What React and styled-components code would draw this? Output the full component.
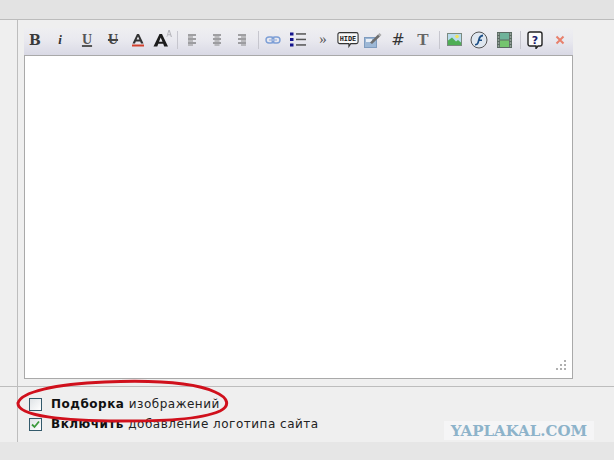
import React from "react";
import styled, { createGlobalStyle } from "styled-components";

const Global = createGlobalStyle`
  html, body { margin: 0; padding: 0; background: #efefef; }
  body { font-family: "DejaVu Sans", Verdana, sans-serif; overflow: hidden; }
`;

const Page = styled.div`
  position: relative;
  width: 614px;
  height: 460px;
  display: flex;
  flex-direction: column;
  background: #efefef;
  overflow: hidden;
`;
const TopBand = styled.div`
  height: 19px;
  flex: none;
  background: #e3e3e3;
  border-bottom: 1px solid #bcbcbc;
`;
const Body = styled.div`
  flex: 1;
  display: flex;
  min-height: 0;
`;
const Gutter = styled.div`
  width: 17px;
  flex: none;
  border-right: 1px solid #bdbdbd;
`;
const Content = styled.div`
  flex: 1;
  display: flex;
  flex-direction: column;
  min-width: 0;
`;
const EditorArea = styled.div`
  height: 366px;
  flex: none;
  box-sizing: border-box;
  padding: 8px 41px 0 6px;
`;
const Divider = styled.div`
  height: 1px;
  flex: none;
  margin-left: -18px;
  background: #bdbdbd;
`;
const Editor = styled.div`
  display: flex;
  flex-direction: column;
  height: 351px;
`;
const Toolbar = styled.div`
  height: 27px;
  flex: none;
  box-sizing: border-box;
  padding-bottom: 4px;
  display: flex;
  align-items: center;
  gap: 3px;
  background: linear-gradient(#efeff1, #e9e9ef 45%, #d9d9e5);
`;
const ToolButton = styled.span`
  width: 22px;
  height: 22px;
  flex: none;
  margin-left: ${(p) => p.$offset || 0}px;
  display: flex;
  align-items: center;
  justify-content: center;
  color: ${(p) => p.$color || "#333"};
  font-family: ${(p) => p.$font || '"Liberation Serif", serif'};
  font-size: ${(p) => p.$size || 14}px;
  font-weight: ${(p) => p.$weight || "bold"};
  font-style: ${(p) => (p.$italic ? "italic" : "normal")};
  text-decoration: ${(p) => p.$deco || "none"};
  text-decoration-thickness: 2px;
  line-height: 1;
`;
const Separator = styled.span`
  width: 1px;
  height: 18px;
  flex: none;
  margin-left: ${(p) => p.$offset || 0}px;
  background: #c6c6ce;
`;
const TextArea = styled.div`
  position: relative;
  flex: 1;
  background: #fff;
  border: 1px solid #a9a9a9;
`;
const Grip = styled.svg`
  position: absolute;
  right: 5px;
  bottom: 6px;
`;
const Options = styled.div`
  display: flex;
  flex-direction: column;
  gap: 6px;
  padding: 10px 0 0 11px;
`;
const OptionRow = styled.label`
  display: flex;
  align-items: center;
  gap: 9px;
  height: 14px;
  font-size: 12px;
  letter-spacing: 0.5px;
  color: #222;
  white-space: nowrap;
`;
const Box = styled.span`
  width: 11px;
  height: 11px;
  flex: none;
  display: flex;
  align-items: center;
  justify-content: center;
  background: linear-gradient(135deg, #dfe3e6, #fff);
  border: 1px solid #335a6b;
`;
const Strong = styled.b`
  font-weight: bold;
  color: #111;
`;
const BottomBand = styled.div`
  height: 18px;
  flex: none;
  background: #e6e6e6;
`;
const Ring = styled.svg`
  position: absolute;
  left: 15px;
  top: 378px;
  pointer-events: none;
`;
const Watermark = styled.div`
  position: absolute;
  left: 444px;
  top: 421px;
  width: 150px;
  height: 19px;
  display: flex;
  align-items: center;
  justify-content: center;
  background: #f5f5f6;
  color: #8db3ca;
  font-family: "DejaVu Serif", serif;
  font-weight: bold;
  font-size: 15px;
`;

const Lines = ({ rows }) => (
  <svg width="10" height="12" viewBox="0 0 10 12">
    {rows.map(([x, w], i) => (
      <rect key={i} x={x} y={0.5 + i * 2} width={w} height="1" fill={i % 2 ? "#8c8c8c" : "#555"} />
    ))}
  </svg>
);

const left = [[1, 8], [1, 5], [1, 8], [1, 5], [1, 8], [1, 5]];
const center = [[1, 8], [2.500, 5], [1, 8], [2.500, 5], [1, 8], [2.500, 5]];
const right = [[1, 8], [4, 5], [1, 8], [4, 5], [1, 8], [4, 5]];

export default function App() {
  return (
    <Page>
      <Global />
      <TopBand />
      <Body>
        <Gutter />
        <Content>
          <EditorArea>
            <Editor>
              <Toolbar>
                <ToolButton $size={14} $font='"DejaVu Serif", serif' $color="#3a3a3a">B</ToolButton>
                <ToolButton $size={13} $italic>i</ToolButton>
                <ToolButton $offset={2} $size={14} $deco="underline" $color="#555">U</ToolButton>
                <ToolButton $offset={1} $size={14} $deco="line-through" $color="#444">U</ToolButton>
                <ToolButton>
                  <svg width="14" height="16" viewBox="0 0 14 16">
                    <path d="M1.500 11.500 6 2h2l4.500 9.500H10L9.200 9.500H4.800L4 11.500z M5.600 7.500h2.800L7 4.400z" fill="#333" fillRule="evenodd" />
                    <rect x="1" y="12.500" width="12" height="2" fill="#d2402c" />
                  </svg>
                </ToolButton>
                <ToolButton>
                  <svg width="22" height="22" viewBox="0 0 22 22">
                    <path d="M1.500 17.500 7.500 5h2.500l6 12.500h-3.800l-1-2.700H6.300l-1 2.700z M7 12.800h3.500L8.700 8.500z" fill="#1c1c1c" fillRule="evenodd" />
                    <path d="M14.500 8 16.400 1h1.300L20 8h-1.200l-.5-1.800h-2.600L15.200 8z M16.100 5.200h1.900L17 2.600z" fill="#b5b5bb" fillRule="evenodd" />
                  </svg>
                </ToolButton>
                <Separator />
                <ToolButton><Lines rows={left} /></ToolButton>
                <ToolButton><Lines rows={center} /></ToolButton>
                <ToolButton><Lines rows={right} /></ToolButton>
                <Separator $offset={2} />
                <ToolButton>
                  <svg width="16" height="10" viewBox="0 0 16 10" fill="none" stroke="#7d9fd6" strokeWidth="1.400">
                    <rect x="1" y="2" width="8" height="6" rx="3" />
                    <rect x="7" y="2" width="8" height="6" rx="3" />
                    <path d="M4 5h8" stroke="#a8bce0" />
                  </svg>
                </ToolButton>
                <ToolButton>
                  <svg width="16" height="15" viewBox="0 0 16 15">
                    <rect x="0" y="0.500" width="3.500" height="3" fill="#14148c" />
                    <rect x="0" y="6" width="3.500" height="3" fill="#14148c" />
                    <rect x="0" y="11.500" width="3.500" height="3" fill="#14148c" />
                    <rect x="6" y="1.200" width="10" height="1.500" fill="#555" />
                    <rect x="6" y="6.700" width="10" height="1.500" fill="#555" />
                    <rect x="6" y="12.200" width="10" height="1.500" fill="#555" />
                  </svg>
                </ToolButton>
                <ToolButton $size={15} $color="#555" $weight="normal">»</ToolButton>
                <ToolButton>
                  <svg width="24" height="17" viewBox="0 0 24 17">
                    <path d="M3 1h18a2 2 0 0 1 2 2v8a2 2 0 0 1-2 2h-6l-2 3v-3H3a2 2 0 0 1-2-2V3a2 2 0 0 1 2-2z" fill="#f8f8f8" stroke="#333" strokeWidth="1.200" />
                    <text x="12" y="10" textAnchor="middle" fontFamily="'DejaVu Sans Mono', monospace" fontWeight="bold" fontSize="7.500" fill="#222">HIDE</text>
                  </svg>
                </ToolButton>
                <ToolButton>
                  <svg width="18" height="16" viewBox="0 0 18 16">
                    <rect x="0.500" y="5.500" width="12" height="10" fill="#9db8d6" stroke="#7f9cbf" />
                    <rect x="2" y="7" width="6" height="3" fill="#e9eef5" />
                    <path d="M6 10.500 14 2.500l2 2-8 7.500z" fill="#6e6e6e" />
                    <path d="M14 2.500 15.500 1 17.500 3 16 4.500z" fill="#aaa" />
                  </svg>
                </ToolButton>
                <ToolButton $size={16} $font='"DejaVu Sans", sans-serif' $color="#333" $weight="normal">#</ToolButton>
                <ToolButton $size={17} $color="#666">T</ToolButton>
                <Separator $offset={2} />
                <ToolButton>
                  <svg width="15" height="13" viewBox="0 0 15 13">
                    <rect x="0.500" y="0.500" width="14" height="12" fill="#b9dcec" stroke="#7a8a80" />
                    <circle cx="10" cy="3.500" r="1.800" fill="#f2e25a" />
                    <path d="M1 12V7.500l4-3 4 4 2-1.500 3 2.500V12z" fill="#4fae55" />
                  </svg>
                </ToolButton>
                <ToolButton>
                  <svg width="18" height="18" viewBox="0 0 18 18">
                    <circle cx="9" cy="9" r="8" fill="#dfe7f0" stroke="#555" />
                    <path d="M13 3.500c-3 .3-4.200 2-4.800 4.500l-.9 3.200c-.3 1-1 1.600-2.300 1.800v1.600c2.300-.2 3.400-1.400 4-3.200l.4-1.400h2.600V8.400H9.900c.4-1.600 1.200-2.800 3.100-3z" fill="#1d4f86" />
                  </svg>
                </ToolButton>
                <ToolButton>
                  <svg width="15" height="16" viewBox="0 0 15 16">
                    <rect x="0" y="0" width="15" height="16" fill="#5a6a62" />
                    <rect x="3" y="1" width="9" height="6.500" fill="#6fb39a" />
                    <rect x="3" y="8.500" width="9" height="6.500" fill="#74c46e" />
                    <path d="M.8 2h1.400M.8 5h1.400M.8 8h1.400M.8 11h1.400M.8 14h1.400M12.800 2h1.400M12.800 5h1.400M12.800 8h1.400M12.800 11h1.400M12.800 14h1.400" stroke="#c8d2cc" />
                  </svg>
                </ToolButton>
                <Separator $offset={2} />
                <ToolButton>
                  <svg width="16" height="18" viewBox="0 0 16 18">
                    <path d="M3 1h10a2 2 0 0 1 2 2v10a2 2 0 0 1-2 2h-2l-2 2.500V15H3a2 2 0 0 1-2-2V3a2 2 0 0 1 2-2z" fill="#fbfbfb" stroke="#222" strokeWidth="1.400" />
                    <text x="8" y="12.500" textAnchor="middle" fontFamily="'DejaVu Sans', sans-serif" fontWeight="bold" fontSize="11" fill="#1c1c6e">?</text>
                  </svg>
                </ToolButton>
                <ToolButton>
                  <svg width="10" height="10" viewBox="0 0 10 10" stroke="#e8806c" strokeWidth="2">
                    <path d="M1.500 1.500l7 7M8.500 1.500l-7 7" />
                  </svg>
                </ToolButton>
              </Toolbar>
              <TextArea>
                <Grip width="13" height="13" viewBox="0 0 13 13" fill="#b0b0b0">
                  <rect x="10" y="1" width="2" height="2" />
                  <rect x="6" y="5" width="2" height="2" />
                  <rect x="10" y="5" width="2" height="2" />
                  <rect x="2" y="9" width="2" height="2" />
                  <rect x="6" y="9" width="2" height="2" />
                  <rect x="10" y="9" width="2" height="2" />
                </Grip>
              </TextArea>
            </Editor>
          </EditorArea>
          <Divider />
          <Options>
            <OptionRow>
              <Box />
              <span><Strong>Подборка</Strong> изображений</span>
            </OptionRow>
            <OptionRow>
              <Box>
                <svg width="9" height="9" viewBox="0 0 9 9" fill="none" stroke="#3c9a3c" strokeWidth="1.800">
                  <path d="M1 4.500l2.500 2.500L8 1.500" />
                </svg>
              </Box>
              <span><Strong>Включить</Strong> добавление логотипа сайта</span>
            </OptionRow>
          </Options>
        </Content>
      </Body>
      <BottomBand />
      <Ring width="216" height="48" viewBox="0 0 216 48" fill="none" stroke="#d0101c" strokeWidth="3">
        <path d="M3 25C6 14 40 6 90 4c50-2 90 1 110 10 14 6 15 14 5 19-20 9-60 10-100 10C50 43 2 38 3 25z" />
      </Ring>
      <Watermark>YAPLAKAL.COM</Watermark>
    </Page>
  );
}
